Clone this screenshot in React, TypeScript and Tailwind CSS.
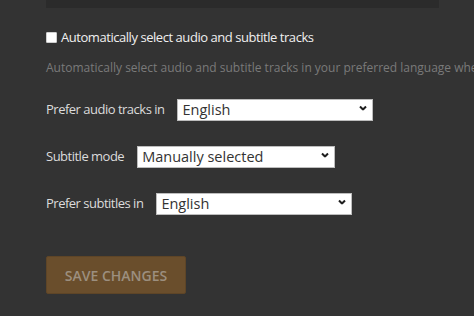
import { ChangeEvent, useState } from 'react'

const languages = ['English', 'French', 'German', 'Spanish', 'Japanese']
const subtitleModes = ['Manually selected', 'Shown with foreign audio', 'Always enabled']

function Chevron() {
  return (
    <svg
      width="8"
      height="5"
      viewBox="0 0 8 5"
      className="pointer-events-none absolute right-[6px] top-1/2 -translate-y-1/2"
      aria-hidden
    >
      <polyline points="1,1 4,4 7,1" fill="none" stroke="#1e1e1e" strokeWidth="2" />
    </svg>
  )
}

function SelectRow({
  label,
  width,
  value,
  options,
  onChange,
}: {
  label: string
  width: string
  value: string
  options: string[]
  onChange: (v: string) => void
}) {
  return (
    <div className="flex h-[22px] items-center">
      <label className="mr-[13px] mt-[2px] text-[13px] leading-[16px] tracking-[-0.5px] text-[#dcdcdc]">{label}</label>
      <div className={`relative h-[22px] ${width}`}>
        <select
          value={value}
          onChange={(e: ChangeEvent<HTMLSelectElement>) => onChange(e.target.value)}
          className="h-full w-full appearance-none rounded-none border border-[#bdbdbd] bg-white pl-[4px] pr-5 text-[14.5px] leading-[20px] text-[#333] outline-none"
        >
          {options.map((o) => (
            <option key={o}>{o}</option>
          ))}
        </select>
        <Chevron />
      </div>
    </div>
  )
}

export default function App() {
  const [auto, setAuto] = useState(false)
  const [audio, setAudio] = useState('English')
  const [mode, setMode] = useState('Manually selected')
  const [subs, setSubs] = useState('English')

  return (
    <div className="h-[316px] w-[474px] overflow-hidden bg-[#333333] pl-[46px] font-['Open_Sans',sans-serif]">
      <div className="h-[8px] w-[393px] bg-[#2b2b2b]" />

      <label className="mt-[21px] flex h-[16px] items-center gap-[4px] whitespace-nowrap text-[13px] leading-[16px] tracking-[-0.45px] text-[#f0f0f0]">
        <input
          type="checkbox"
          checked={auto}
          onChange={() => setAuto(!auto)}
          className="m-0 h-[11px] w-[11px] appearance-none rounded-[1px] border border-[#cfcfcf] bg-white"
        />
        Automatically select audio and subtitle tracks
      </label>

      <p className="mt-[15px] whitespace-nowrap text-[12px] leading-[16px] text-[#7a7a7a]">
        Automatically select audio and subtitle tracks in your preferred language when available.
      </p>

      <div className="mt-[21px] flex flex-col gap-[25px]">
        <SelectRow label="Prefer audio tracks in" width="w-[196px]" value={audio} options={languages} onChange={setAudio} />
        <SelectRow label="Subtitle mode" width="w-[198px]" value={mode} options={subtitleModes} onChange={setMode} />
        <SelectRow label="Prefer subtitles in" width="w-[196px]" value={subs} options={languages} onChange={setSubs} />
      </div>

      <button
        type="button"
        className="mt-[43px] h-[38px] w-[140px] rounded-[2px] border border-[#5e4527] bg-[#6a4e2c] text-[14px] font-semibold uppercase text-[#9c8f7f]"
      >
        Save changes
      </button>
    </div>
  )
}
